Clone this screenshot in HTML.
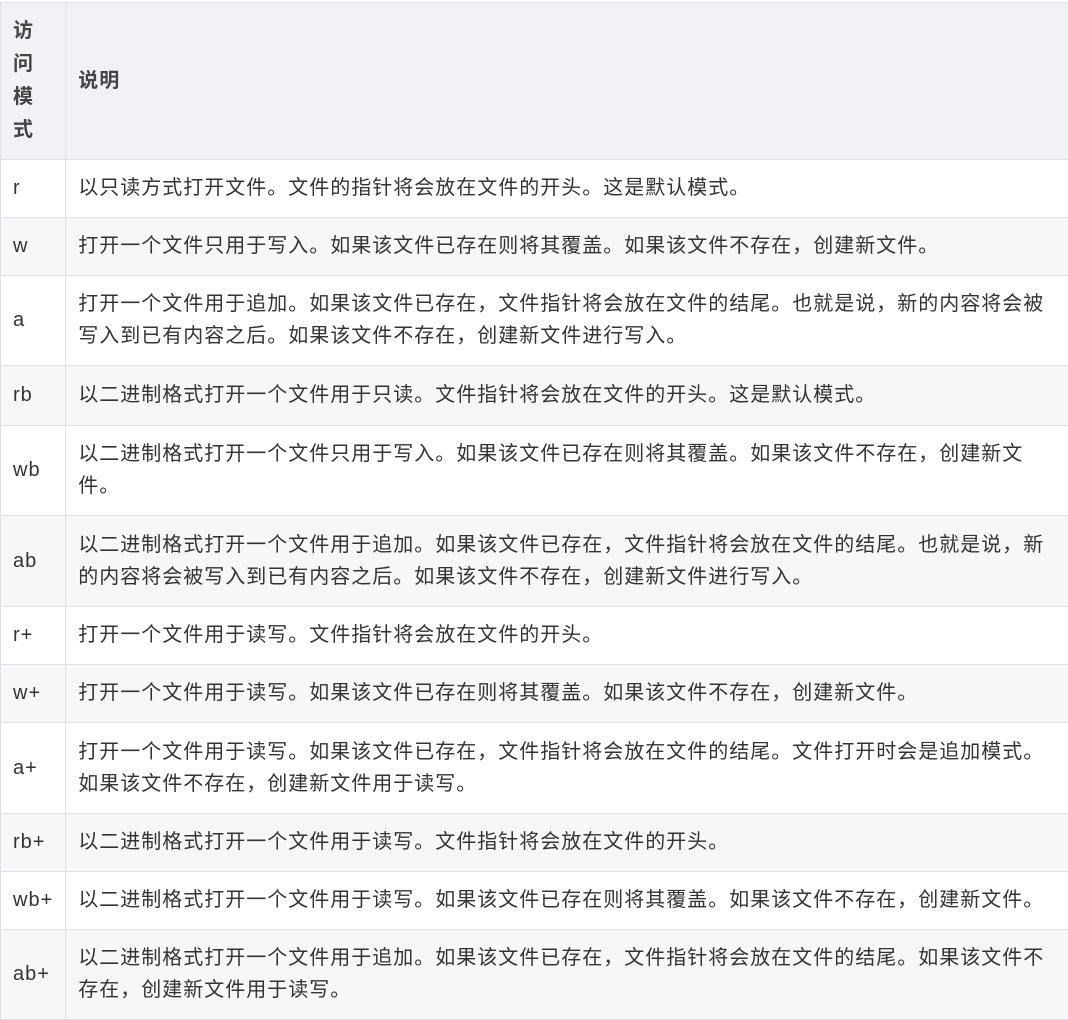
<!DOCTYPE html>
<html><head><meta charset="utf-8"><style>
html,body{margin:0;padding:0;background:#fff;}
body{width:1068px;height:1019px;overflow:hidden;font-family:"Liberation Sans","Noto Sans CJK SC",sans-serif;color:#333;}
table{border-collapse:collapse;position:absolute;left:0;top:2px;width:1070px;}
td,th{border:1px solid #dfe2e5;padding:12px 12px 13px 12px;font-size:20px;line-height:32px;letter-spacing:1px;text-align:left;vertical-align:middle;white-space:nowrap;}
th{background:#f0f2f5;font-weight:bold;color:#444;line-height:33px;padding:12px;}
td:first-child,th:first-child{width:40px;}
tr:nth-child(odd) td{background:#f7f7f7;}
tr:nth-child(even) td{background:#fff;}
</style></head><body>
<table>
<tr><th>访<br>问<br>模<br>式</th><th>说明</th></tr>
<tr><td>r</td><td>以只读方式打开文件。文件的指针将会放在文件的开头。这是默认模式。</td></tr>
<tr><td>w</td><td>打开一个文件只用于写入。如果该文件已存在则将其覆盖。如果该文件不存在，创建新文件。</td></tr>
<tr><td>a</td><td>打开一个文件用于追加。如果该文件已存在，文件指针将会放在文件的结尾。也就是说，新的内容将会被<br>写入到已有内容之后。如果该文件不存在，创建新文件进行写入。</td></tr>
<tr style="height:60px"><td>rb</td><td>以二进制格式打开一个文件用于只读。文件指针将会放在文件的开头。这是默认模式。</td></tr>
<tr><td>wb</td><td>以二进制格式打开一个文件只用于写入。如果该文件已存在则将其覆盖。如果该文件不存在，创建新文<br>件。</td></tr>
<tr style="height:91px"><td>ab</td><td>以二进制格式打开一个文件用于追加。如果该文件已存在，文件指针将会放在文件的结尾。也就是说，新<br>的内容将会被写入到已有内容之后。如果该文件不存在，创建新文件进行写入。</td></tr>
<tr><td>r+</td><td>打开一个文件用于读写。文件指针将会放在文件的开头。</td></tr>
<tr><td>w+</td><td>打开一个文件用于读写。如果该文件已存在则将其覆盖。如果该文件不存在，创建新文件。</td></tr>
<tr style="height:91px"><td>a+</td><td>打开一个文件用于读写。如果该文件已存在，文件指针将会放在文件的结尾。文件打开时会是追加模式。<br>如果该文件不存在，创建新文件用于读写。</td></tr>
<tr><td>rb+</td><td>以二进制格式打开一个文件用于读写。文件指针将会放在文件的开头。</td></tr>
<tr><td>wb+</td><td>以二进制格式打开一个文件用于读写。如果该文件已存在则将其覆盖。如果该文件不存在，创建新文件。</td></tr>
<tr><td>ab+</td><td>以二进制格式打开一个文件用于追加。如果该文件已存在，文件指针将会放在文件的结尾。如果该文件不<br>存在，创建新文件用于读写。</td></tr>
</table>
</body></html>
